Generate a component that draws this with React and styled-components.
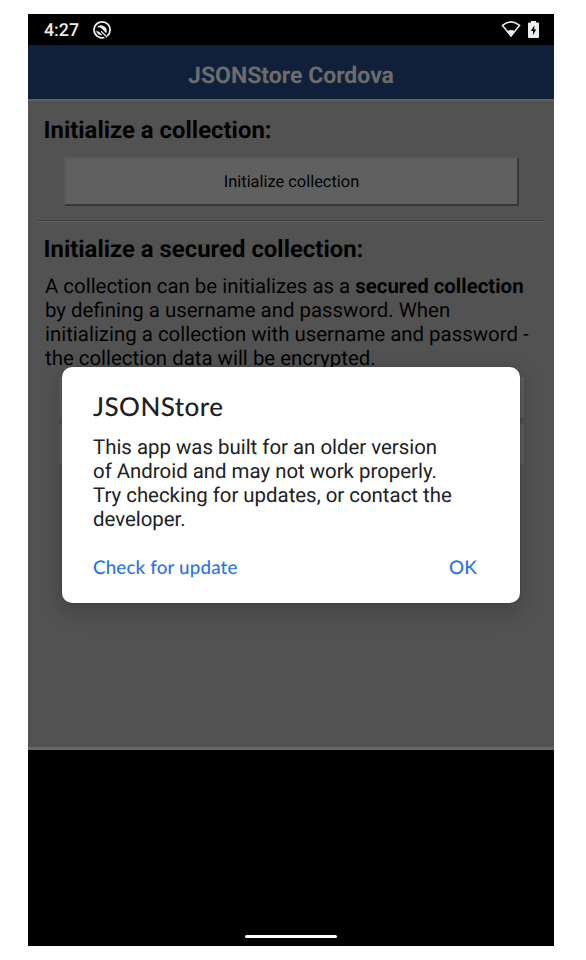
import React from 'react';
import styled, { createGlobalStyle } from 'styled-components';

const GlobalStyle = createGlobalStyle`
  * { box-sizing: border-box; }
  body { margin: 0; background: #fff; font-family: Roboto, sans-serif; text-rendering: geometricPrecision; }
  h1, h2, p { margin: 0; }
`;

const Page = styled.div`
  height: 960px;
  padding: 14px 32px 14px 28px;
`;

const Phone = styled.div`
  position: relative;
  display: flex;
  flex-direction: column;
  width: 526px;
  height: 932px;
  background: #000;
  overflow: hidden;
`;

const StatusBar = styled.div`
  display: flex;
  align-items: center;
  height: 31px;
  padding: 1px 15px 0 16px;
  color: #ececec;
`;

const Clock = styled.span`
  width: 48px;
  padding-top: 2px;
  font: 500 17.8px/30px Roboto, sans-serif;
`;

const StatusIcons = styled.div`
  display: flex;
  align-items: center;
  gap: 7px;
  margin: -1px 0 0 auto;
  svg { display: block; }
`;

const Header = styled.header`
  height: 54px;
  padding-top: 17px;
  background: #11203a;
  color: #6c6c6c;
  text-align: center;
`;

const HeaderTitle = styled.h1`
  font: 700 23px/28px Roboto, sans-serif;
`;

const Content = styled.main`
  height: 651px;
  border-top: 2px solid #5f6060;
  border-bottom: 3px solid #686868;
  background: #525252;
  color: #020202;
`;

const Heading = styled.h2`
  padding-left: 15.5px;
  font: 700 23.9px/28px Roboto, sans-serif;
`;

const FirstSection = styled.section`
  height: 119px;
  padding-top: 15px;
`;

const Button = styled.div`
  display: flex;
  align-items: center;
  justify-content: center;
  width: 455px;
  height: 49px;
  margin: 13px 0 0 36px;
  padding-top: 2px;
  border: 2px solid;
  border-color: #595959 #383838 #383838 #595959;
  background: #606060;
  font-size: 16.4px;
`;

const Rule = styled.hr`
  width: 506px;
  height: 2px;
  margin: 0 10px;
  border: 0;
  border-top: 1px solid #3d3d3d;
  border-bottom: 1px solid #616161;
`;

const SecuredSection = styled.section`
  padding-top: 13px;
`;

const Paragraph = styled.p`
  padding: 11px 0 0 17px;
  font-size: 20.42px;
  line-height: 24px;
`;

const Line = styled.span`
  display: block;
  white-space: nowrap;
`;

const FieldList = styled.div`
  display: grid;
  gap: 7px;
  width: 465px;
  margin: 7px 0 0 31px;
`;

const Field = styled.div`
  height: 40px;
  background: #5e5e5e;
`;

const NavArea = styled.div`
  display: flex;
  flex: 1;
  align-items: flex-end;
  justify-content: center;
  padding-bottom: 8px;
`;

const NavHandle = styled.div`
  width: 92px;
  height: 3px;
  border-radius: 2px;
  background: #fff;
`;

const Dialog = styled.div`
  position: absolute;
  left: 34px;
  top: 353px;
  width: 458px;
  height: 236px;
  padding: 24px 31px 0;
  border-radius: 10px;
  background: #fff;
  color: #202124;
  box-shadow: 0 8px 22px 2px rgba(0, 0, 0, 0.18), 0 0 2px rgba(0, 0, 0, 0.3);
`;

const DialogTitle = styled.h2`
  font: 500 26px/30px Lato, sans-serif;
  letter-spacing: 0.45px;
`;

const DialogText = styled.p`
  margin-top: 14px;
  font-size: 20.4px;
  line-height: 24px;
`;

const DialogActions = styled.div`
  display: flex;
  justify-content: space-between;
  margin-top: 25px;
  padding-right: 12px;
`;

const Action = styled.span`
  color: #2b74e2;
  font: 500 18.8px/24px Lato, sans-serif;
  letter-spacing: 0.15px;
`;

const NotificationIcon = () => (
  <svg width="20" height="20" viewBox="0 0 20 20" fill="none">
    <path d="M15.3 15.9A8 8 0 1 0 12.4 17.5" stroke="#ececec" strokeWidth="1.8" />
    <path d="M4.6 7.6A5.6 5.6 0 0 1 14.2 13.2L10.6 9.4Q8.2 6.2 4.6 7.6Z" fill="#ececec" />
    <path d="M4.2 10.4A5.4 5.4 0 0 0 10.4 15.2L7.4 12Z" fill="#ececec" />
    <path d="M9 11.2L15.2 17.3" stroke="#ececec" strokeWidth="1.2" />
  </svg>
);

const WifiIcon = () => (
  <svg width="20" height="17" viewBox="0 0 20 17">
    <path d="M1.5 4.4Q10-2.5 18.5 4.4L10 15Z" fill="none" stroke="#ececec" strokeWidth="1.6" />
    <path d="M6.1 10.2Q10 7.7 13.9 10.2L10 15.8Z" fill="#ececec" />
  </svg>
);

const BatteryIcon = () => (
  <svg width="11" height="17" viewBox="0 0 11 17">
    <path d="M3 0H8V1.5H10Q11 1.5 11 2.5V16Q11 17 10 17H1Q0 17 0 16V2.5Q0 1.5 1 1.5H3Z" fill="#ececec" />
    <path d="M6.3 4.6L2.8 10.1H5V14L8.2 8.6H6.3Z" fill="#000" />
  </svg>
);

export default function App() {
  return (
    <>
      <GlobalStyle />
      <Page>
        <Phone>
          <StatusBar>
            <Clock>4:27</Clock>
            <NotificationIcon />
            <StatusIcons>
              <WifiIcon />
              <BatteryIcon />
            </StatusIcons>
          </StatusBar>
          <Header>
            <HeaderTitle>JSONStore Cordova</HeaderTitle>
          </Header>
          <Content>
            <FirstSection>
              <Heading>Initialize a collection:</Heading>
              <Button>Initialize collection</Button>
            </FirstSection>
            <Rule />
            <SecuredSection>
              <Heading>Initialize a secured collection:</Heading>
              <Paragraph>
                <Line>A collection can be initializes as a <b>secured collection</b></Line>
                <Line>by defining a username and password. When</Line>
                <Line>initializing a collection with username and password -</Line>
                <Line>the collection data will be encrypted.</Line>
              </Paragraph>
              <FieldList>
                <Field />
                <Field />
              </FieldList>
            </SecuredSection>
          </Content>
          <NavArea>
            <NavHandle />
          </NavArea>
          <Dialog>
            <DialogTitle>JSONStore</DialogTitle>
            <DialogText>
              <Line>This app was built for an older version</Line>
              <Line>of Android and may not work properly.</Line>
              <Line>Try checking for updates, or contact the</Line>
              <Line>developer.</Line>
            </DialogText>
            <DialogActions>
              <Action>Check for update</Action>
              <Action>OK</Action>
            </DialogActions>
          </Dialog>
        </Phone>
      </Page>
    </>
  );
}
